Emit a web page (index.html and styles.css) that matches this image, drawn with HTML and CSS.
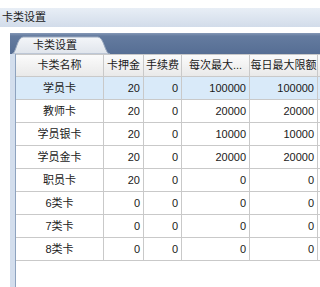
FILE: index.html
```html
<!DOCTYPE html>
<html lang="zh-CN">
<head>
  <meta charset="UTF-8">
  <title>卡类设置</title>
  <link rel="stylesheet" href="styles.css">
</head>
<body>
  <div class="title-bar">卡类设置</div>

  <div class="panel">
    <div class="tab-bar">
      <div class="tab">
        <svg class="tab-shape" width="98" height="18" viewBox="0 0 98 18">
          <defs>
            <linearGradient id="tabfill" x1="0" y1="0" x2="0" y2="1">
              <stop offset="0" stop-color="#f4f6f9"/>
              <stop offset="1" stop-color="#dfe4eb"/>
            </linearGradient>
          </defs>
          <path d="M0,18 C4,18 5,1.5 11,1 L86,1 C92,1.5 93,18 98,18 Z" fill="url(#tabfill)" stroke="#9aa9bf" stroke-width="1"/>
        </svg>
        <span class="tab-label">卡类设置</span>
      </div>
    </div>

    <div class="panel-body">
      <div class="side"></div>
      <div class="grid">
        <div class="cell head">卡类名称</div>
        <div class="cell head">卡押金</div>
        <div class="cell head">手续费</div>
        <div class="cell head">每次最大...</div>
        <div class="cell head">每日最大限额</div>
        <div class="cell head last"></div>

        <div class="cell name sel">学员卡</div>
        <div class="cell num sel">20</div>
        <div class="cell num sel">0</div>
        <div class="cell num sel">100000</div>
        <div class="cell num sel">100000</div>
        <div class="cell sel last"></div>

        <div class="cell name">教师卡</div>
        <div class="cell num">20</div>
        <div class="cell num">0</div>
        <div class="cell num">20000</div>
        <div class="cell num">20000</div>
        <div class="cell last"></div>

        <div class="cell name">学员银卡</div>
        <div class="cell num">20</div>
        <div class="cell num">0</div>
        <div class="cell num">10000</div>
        <div class="cell num">10000</div>
        <div class="cell last"></div>

        <div class="cell name">学员金卡</div>
        <div class="cell num">20</div>
        <div class="cell num">0</div>
        <div class="cell num">20000</div>
        <div class="cell num">20000</div>
        <div class="cell last"></div>

        <div class="cell name">职员卡</div>
        <div class="cell num">20</div>
        <div class="cell num">0</div>
        <div class="cell num">0</div>
        <div class="cell num">0</div>
        <div class="cell last"></div>

        <div class="cell name">6类卡</div>
        <div class="cell num">0</div>
        <div class="cell num">0</div>
        <div class="cell num">0</div>
        <div class="cell num">0</div>
        <div class="cell last"></div>

        <div class="cell name">7类卡</div>
        <div class="cell num">0</div>
        <div class="cell num">0</div>
        <div class="cell num">0</div>
        <div class="cell num">0</div>
        <div class="cell last"></div>

        <div class="cell name">8类卡</div>
        <div class="cell num">0</div>
        <div class="cell num">0</div>
        <div class="cell num">0</div>
        <div class="cell num">0</div>
        <div class="cell last"></div>
      </div>
    </div>
  </div>
</body>
</html>
```

FILE: styles.css
```css
body {
  margin: 0;
  width: 320px;
  height: 287px;
  overflow: hidden;
  background: #fff;
  font-family: "Liberation Sans", "Noto Sans CJK SC", sans-serif;
  font-size: 11px;
  color: #1a1a1a;
}

.title-bar {
  margin-top: 8px;
  height: 19px;
  line-height: 19px;
  padding-left: 2px;
  background: linear-gradient(#e8eef6, #d2dcea);
}

.panel {
  margin-top: 6px;
  margin-left: 10px;
  height: 254px;
  display: flex;
  flex-direction: column;
}

.tab-bar {
  height: 21px;
  display: flex;
  align-items: flex-end;
  padding-left: 2px;
  background: linear-gradient(#8598b6 0, #647b9f 3px, #566e94 100%);
}

.tab {
  position: relative;
  width: 98px;
  height: 18px;
}

.tab-shape {
  position: absolute;
  left: 0;
  top: 0;
}

.tab-label {
  position: relative;
  display: block;
  padding-left: 21px;
  line-height: 19px;
}

.panel-body {
  flex: 1;
  display: flex;
}

.side {
  width: 5px;
  background: #d3deed;
  border-right: 1px solid #8ea3bf;
}

.grid {
  flex: 1;
  display: grid;
  grid-template-columns: 88px 40px 38px 68px 68px 1fr;
  grid-template-rows: 22px;
  grid-auto-rows: 23px;
  align-content: start;
  border-top: 1px solid #c9c9c9;
}

.cell {
  box-sizing: border-box;
  border-right: 1px solid #c9c9c9;
  border-bottom: 1px solid #c9c9c9;
  line-height: 22px;
  white-space: nowrap;
  overflow: hidden;
}

.cell.last {
  border-right: none;
}

.head {
  line-height: 21px;
  text-align: center;
  background: linear-gradient(#fbfbfb, #e9e9e9);
}

.name {
  text-align: center;
}

.num {
  text-align: right;
  padding-right: 3px;
}

.sel {
  background: #d9eaf9;
}
```
